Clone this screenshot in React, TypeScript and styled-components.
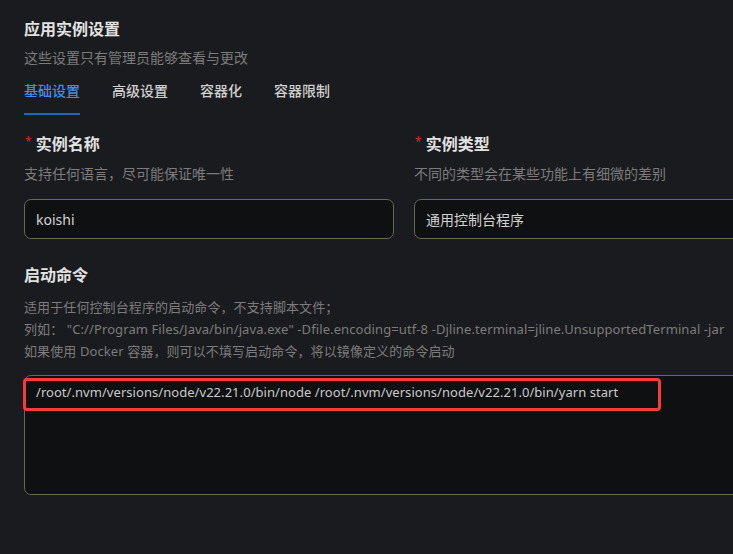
import React from 'react';
import styled, {createGlobalStyle} from 'styled-components';

const GlobalStyle = createGlobalStyle`
    html, body {
        margin: 0;
        padding: 0;
        background: #1a1b1e;
        overflow: hidden;
    }
    body {
        font-family: "Noto Sans", "Noto Sans CJK SC", sans-serif;
    }
`;

const Page = styled.div`
    width: 761px;
    padding: 17px 24px 40px;
    color: #d6d6d6;
`;

const Title = styled.h2`
    margin: 0;
    font-size: 16px;
    line-height: 24px;
    font-weight: 700;
    color: #e2e2e2;
`;

const SubTitle = styled.p`
    margin: 6px 0 0;
    font-size: 14px;
    line-height: 22px;
    color: #7c7c7c;
`;

const Tabs = styled.div`
    display: flex;
    gap: 32px;
    margin-top: 11px;
`;

const Tab = styled.div<{$active?: boolean}>`
    position: relative;
    font-size: 14px;
    line-height: 22px;
    padding-bottom: 13px;
    font-weight: 500;
    color: ${(p) => (p.$active ? '#3f8ee8' : '#cfcfcf')};
    &::after {
        content: '';
        position: absolute;
        left: 0;
        right: 0;
        bottom: 0;
        height: 2px;
        background: ${(p) => (p.$active ? '#1f63c4' : 'transparent')};
    }
`;

const Grid = styled.div`
    display: grid;
    grid-template-columns: 370px 370px;
    column-gap: 20px;
    margin-top: 17px;
`;

const Field = styled.div`
    display: flex;
    flex-direction: column;
`;

const Label = styled.div`
    font-size: 16px;
    line-height: 24px;
    font-weight: 700;
    color: #e2e2e2;
    display: flex;
    align-items: center;
    gap: 4px;
    .star {
        color: #e51c1c;
        font-size: 12px;
        font-weight: 400;
        margin-top: -5px;
        margin-left: 1px;
    }
`;

const Help = styled.div`
    margin-top: 7px;
    font-size: 14px;
    line-height: 22px;
    color: #7c7c7c;
`;

const Input = styled.div`
    box-sizing: border-box;
    margin-top: 14px;
    height: 40px;
    border: 1px solid #6c6656;
    border-radius: 7px;
    background: #0f1012;
    padding: 0 11px;
    display: flex;
    align-items: center;
    font-size: 14px;
    color: #d2d2d2;
`;

const Section = styled.div`
    margin-top: 24px;
`;

const Desc = styled.div`
    margin-top: 9px;
    font-size: 13px;
    line-height: 22px;
    color: #7c7c7c;
    white-space: nowrap;
    letter-spacing: 0.1px;
`;

const CommandBox = styled.div`
    position: relative;
    margin-top: 13px;
`;

const CommandArea = styled.textarea`
    display: block;
    box-sizing: border-box;
    width: 761px;
    height: 120px;
    margin: 0;
    border: 1px solid #6c6656;
    border-radius: 7px;
    background: #0f1012;
    padding: 6px 11px;
    resize: none;
    outline: none;
    font-family: "Noto Sans", "Noto Sans CJK SC", sans-serif;
    font-size: 13px;
    line-height: 20px;
    letter-spacing: 0.05px;
    color: #cacaca;
`;

// annotation drawn over the command
const Highlight = styled.div`
    position: absolute;
    left: -1px;
    top: 3px;
    width: 638px;
    height: 33px;
    box-sizing: border-box;
    border: 3px solid #fd3a3a;
    border-radius: 4px;
    pointer-events: none;
`;

export default function App() {
    return (
        <>
            <GlobalStyle />
            <Page>
                <Title>应用实例设置</Title>
                <SubTitle>这些设置只有管理员能够查看与更改</SubTitle>
                <Tabs>
                    <Tab $active>基础设置</Tab>
                    <Tab>高级设置</Tab>
                    <Tab>容器化</Tab>
                    <Tab>容器限制</Tab>
                </Tabs>
                <Grid>
                    <Field>
                        <Label>
                            <span className='star'>*</span>
                            实例名称
                        </Label>
                        <Help>支持任何语言，尽可能保证唯一性</Help>
                        <Input>koishi</Input>
                    </Field>
                    <Field>
                        <Label>
                            <span className='star'>*</span>
                            实例类型
                        </Label>
                        <Help>不同的类型会在某些功能上有细微的差别</Help>
                        <Input>通用控制台程序</Input>
                    </Field>
                </Grid>
                <Section>
                    <Label>启动命令</Label>
                    <Desc>
                        适用于任何控制台程序的启动命令，不支持脚本文件；
                        <br />
                        列如： "C://Program Files/Java/bin/java.exe" -Dfile.encoding=utf-8 -Djline.terminal=jline.UnsupportedTerminal -jar
                        <br />
                        如果使用 Docker 容器，则可以不填写启动命令，将以镜像定义的命令启动
                    </Desc>
                    <CommandBox>
                        <CommandArea
                            readOnly
                            defaultValue='/root/.nvm/versions/node/v22.21.0/bin/node /root/.nvm/versions/node/v22.21.0/bin/yarn start'
                        />
                        <Highlight />
                    </CommandBox>
                </Section>
            </Page>
        </>
    );
}
